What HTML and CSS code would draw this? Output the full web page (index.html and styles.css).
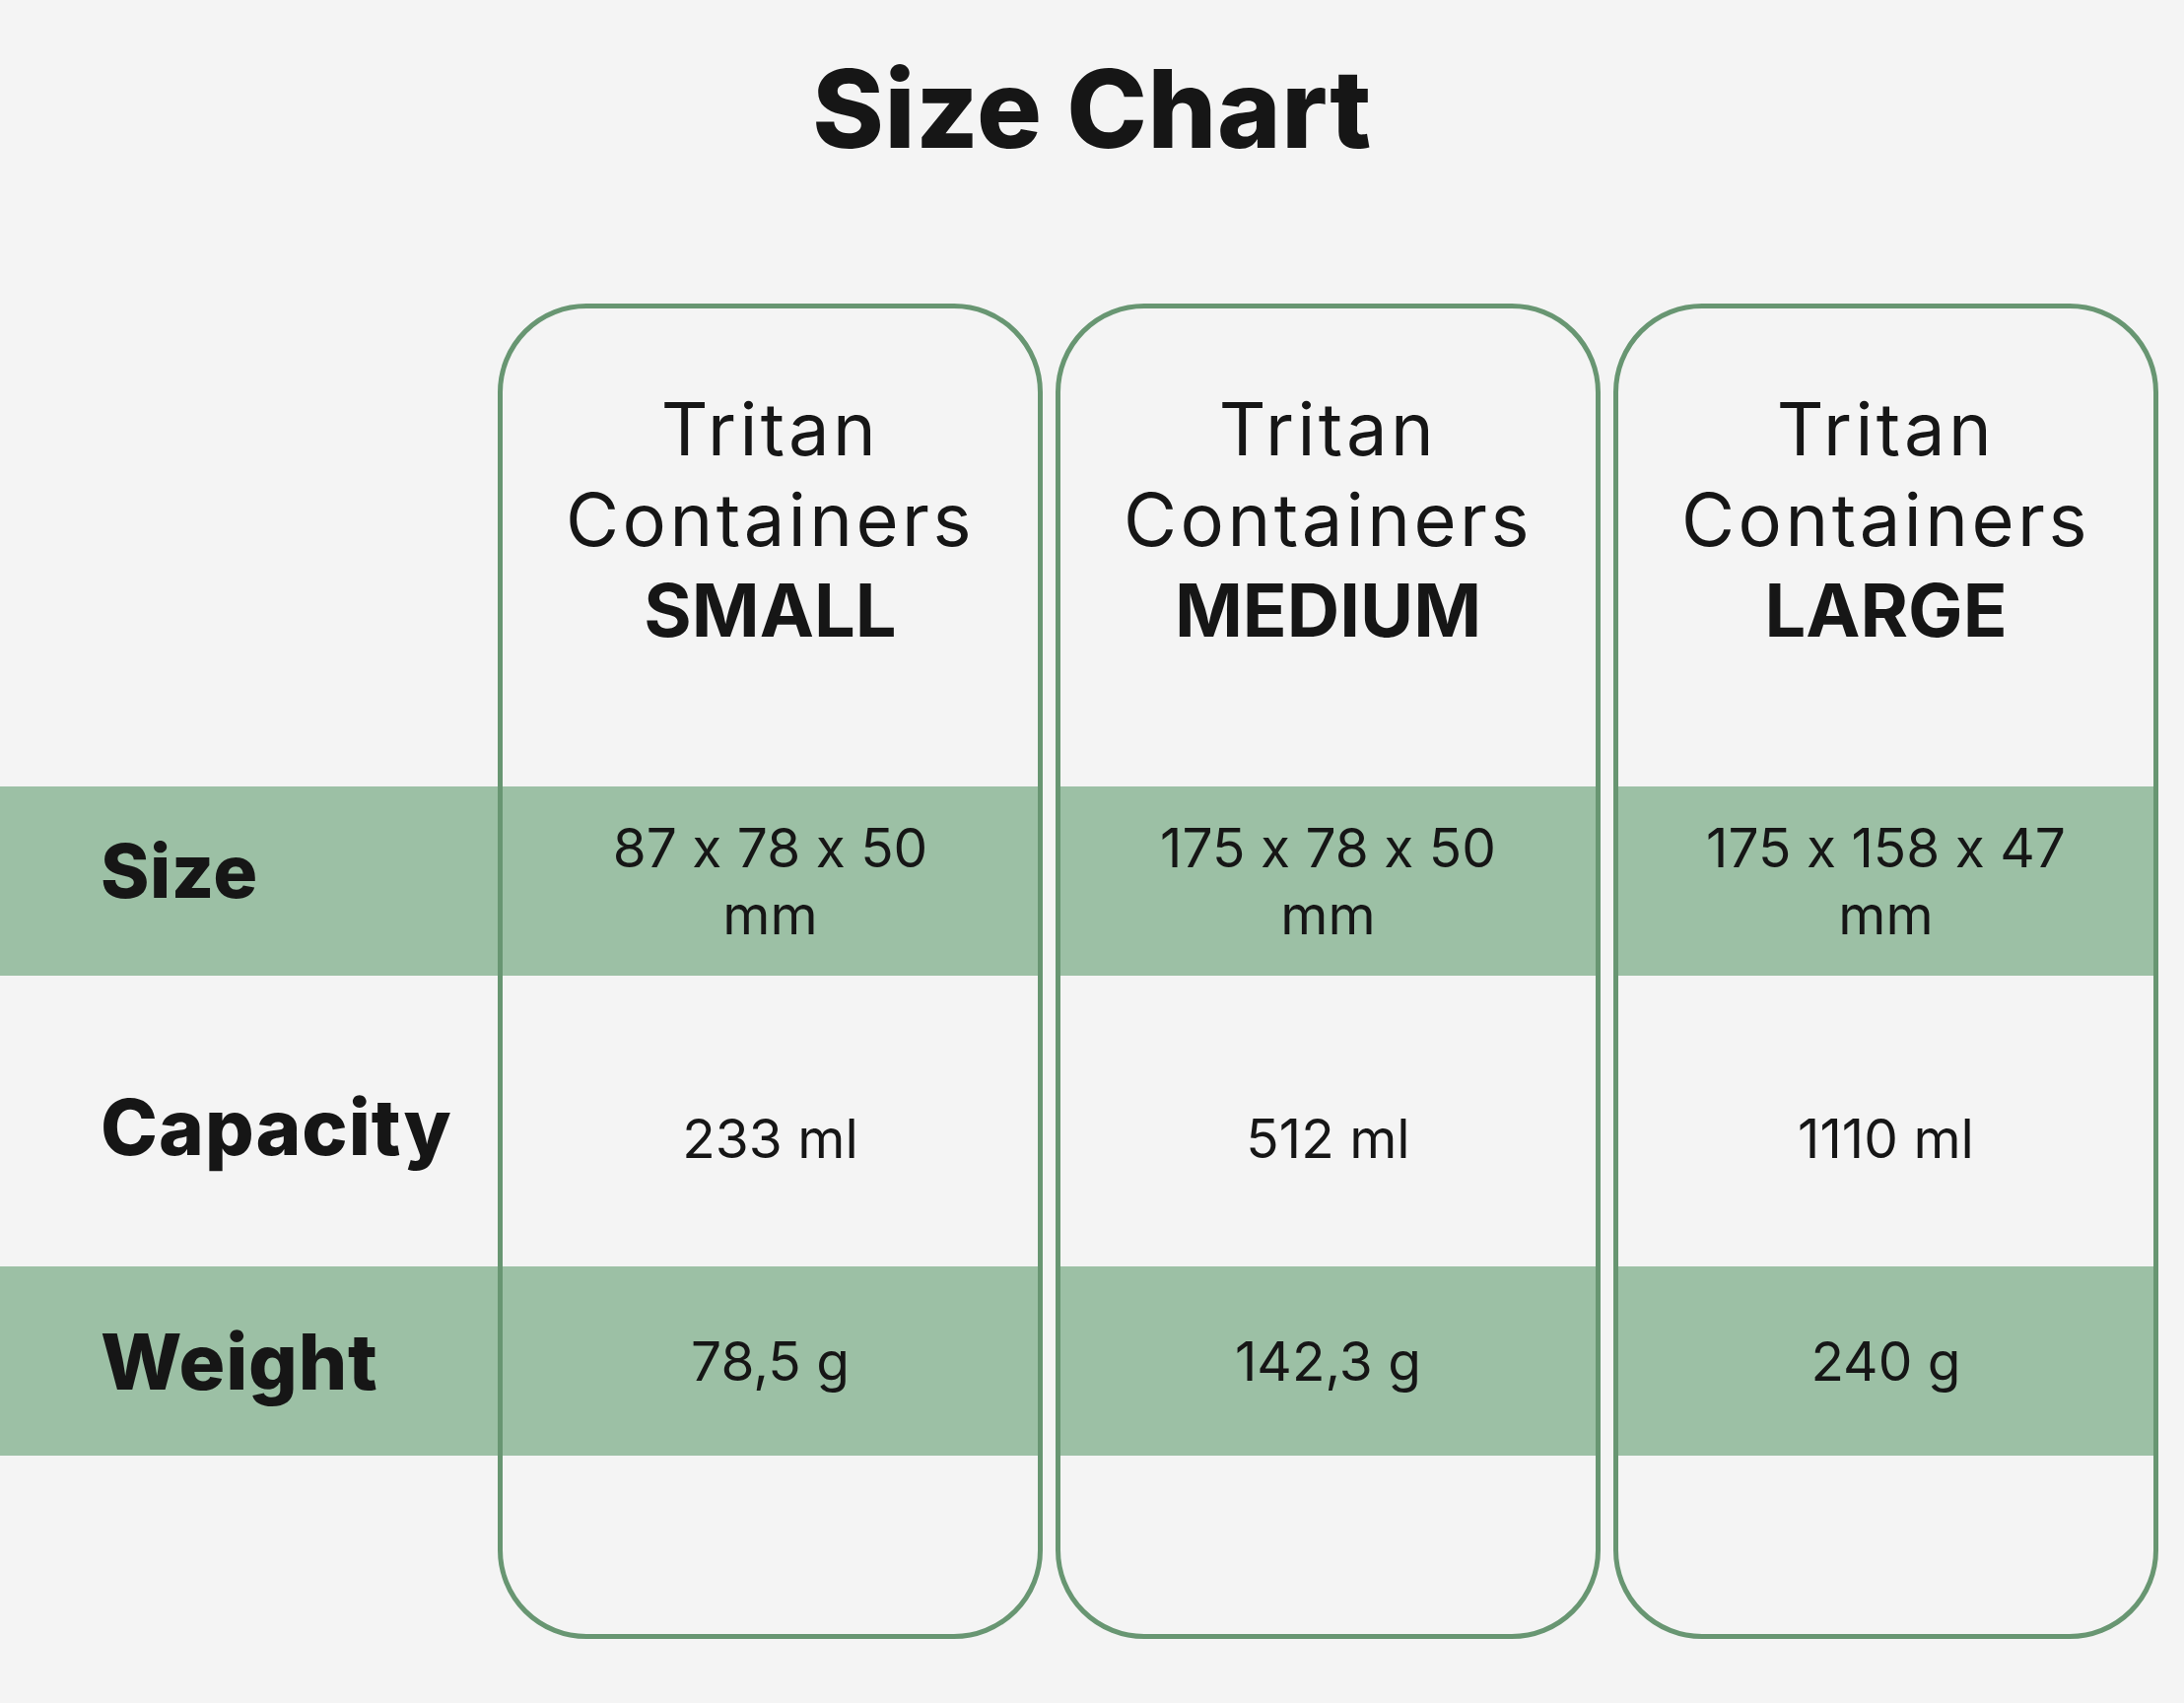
FILE: index.html
```html
<!DOCTYPE html>
<html lang="en">
<head>
<meta charset="utf-8">
<title>Size Chart</title>
<link rel="stylesheet" href="styles.css">
</head>
<body>
<main class="page">
  <h1 class="title">Size Chart</h1>
  <section class="chart">
    <div class="labels">
      <div class="label-row band"><span class="label label-size">Size</span></div>
      <div class="label-row plain"><span class="label label-capacity">Capacity</span></div>
      <div class="label-row band"><span class="label label-weight">Weight</span></div>
    </div>
    <div class="cards">
      <article class="card">
        <header class="card-head">Tritan<br>Containers<br><strong>SMALL</strong></header>
        <div class="cell band size">87 x 78 x 50<br>mm</div>
        <div class="cell plain capacity">233 ml</div>
        <div class="cell band weight">78,5 g</div>
        <div class="card-foot"></div>
      </article>
      <article class="card">
        <header class="card-head">Tritan<br>Containers<br><strong>MEDIUM</strong></header>
        <div class="cell band size">175 x 78 x 50<br>mm</div>
        <div class="cell plain capacity">512 ml</div>
        <div class="cell band weight">142,3 g</div>
        <div class="card-foot"></div>
      </article>
      <article class="card">
        <header class="card-head">Tritan<br>Containers<br><strong>LARGE</strong></header>
        <div class="cell band size">175 x 158 x 47<br>mm</div>
        <div class="cell plain capacity">1110 ml</div>
        <div class="cell band weight">240 g</div>
        <div class="card-foot"></div>
      </article>
    </div>
  </section>
</main>
</body>
</html>
```

FILE: styles.css
```css
html, body {
  margin: 0;
  padding: 0;
  background: #f4f4f4;
}

body {
  font-family: "Inter", "Open Sans", "DejaVu Sans", sans-serif;
  font-feature-settings: "calt" 0;
  color: #161616;
  width: 2216px;
  height: 1728px;
  overflow: hidden;
}

.page {
  display: flex;
  flex-direction: column;
}

.title {
  margin: 0;
  padding-top: 45px;
  height: 308px;
  box-sizing: border-box;
  text-align: center;
  font-size: 110px;
  line-height: 130px;
  font-weight: 800;
  letter-spacing: 0.5px;
}

.chart {
  display: flex;
  align-items: flex-start;
}

.labels {
  width: 505px;
  padding-top: 490px;
  display: flex;
  flex-direction: column;
}

.label-row {
  display: flex;
  align-items: center;
  padding-left: 102px;
  box-sizing: border-box;
}

.label-row:nth-child(1) { height: 192px; padding-bottom: 22px; }
.label-row:nth-child(2) { height: 295px; padding-top: 12px; }
.label-row:nth-child(3) { height: 192px; }

.label {
  font-size: 75px;
  font-weight: 800;
  letter-spacing: 0.5px;
}

.label-capacity { font-size: 78px; letter-spacing: 1px; }
.label-weight { font-size: 78px; letter-spacing: 0.8px; }

.band { background: #9cc0a5; }
.plain { background: transparent; }

.cards {
  display: flex;
  gap: 13px;
}

.card {
  width: 553px;
  height: 1355px;
  box-sizing: border-box;
  border: 5px solid #689672;
  border-radius: 90px;
  display: flex;
  flex-direction: column;
  overflow: hidden;
}

.card-head {
  height: 485px;
  box-sizing: border-box;
  padding-top: 76px;
  text-align: center;
  font-size: 74px;
  line-height: 92px;
  font-weight: 400;
  letter-spacing: 3.5px;
}

.card-head strong {
  font-weight: 700;
  letter-spacing: 0;
}

.cell {
  display: flex;
  align-items: center;
  justify-content: center;
  text-align: center;
  font-size: 55px;
  line-height: 68px;
  box-sizing: border-box;
  letter-spacing: 0;
}

.cell.size { height: 192px; }
.cell.capacity { height: 295px; padding-top: 34px; }
.cell.weight { height: 192px; }

.card-foot {
  flex: 1;
}
```
